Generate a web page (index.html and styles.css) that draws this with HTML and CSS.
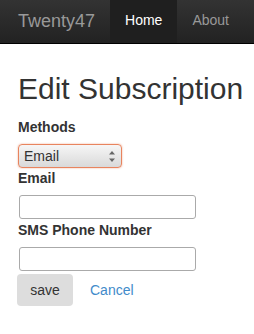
FILE: index.html
```html
<!DOCTYPE html>
<html lang="en">
<head>
    <meta charset="UTF-8">
    <title>Edit Subscription</title>
    <link rel="stylesheet" href="styles.css">
</head>
<body>
    <div class="navbar">
        <a class="brand" href="#">Twenty47</a>
        <ul class="nav">
            <li class="active"><a href="#">Home</a></li>
            <li><a href="#">About</a></li>
        </ul>
    </div>
    <div class="container">
        <h1>Edit Subscription</h1>
        <form>
            <label for="methods">Methods</label>
            <div class="select-wrap">
                <select id="methods">
                    <option>Email</option>
                    <option>SMS</option>
                </select>
                <svg class="arrows" width="6" height="11" viewBox="0 0 6 11">
                    <path d="M3 0 L6 3.5 L0 3.5 Z M0 7.5 L6 7.5 L3 11 Z" fill="#666"/>
                </svg>
            </div>
            <label for="email">Email</label>
            <input type="text" id="email">
            <label for="sms">SMS Phone Number</label>
            <input type="text" id="sms">
            <div class="actions">
                <button type="submit" class="save-button">save</button>
                <a href="#" class="cancel">Cancel</a>
            </div>
        </form>
    </div>
</body>
</html>
```

FILE: styles.css
```css
body {
    font-family: "Liberation Sans", Arial, sans-serif;
    font-size: 14px;
    line-height: 16px;
    margin: 0;
    padding: 0;
    color: #333;
    background: #fff;
}
.navbar {
    display: flex;
    align-items: stretch;
    height: 43px;
    background: linear-gradient(#333, #222);
    border-bottom: 1px solid #000;
}
.brand {
    display: block;
    padding: 11px 15px 0 18px;
    font-size: 18px;
    line-height: 20px;
    color: #999;
    text-decoration: none;
}
.nav {
    display: flex;
    list-style: none;
    margin: 0;
    padding: 0;
}
.nav li a {
    display: block;
    height: 43px;
    box-sizing: border-box;
    padding: 12px 15px 0;
    color: #999;
    text-decoration: none;
}
.nav li.active a {
    background: #1f1f1f;
    color: #fff;
}
.container {
    padding: 0 18px;
}
h1 {
    font-size: 30px;
    font-weight: normal;
    line-height: 34px;
    margin: 28px 0 13px;
    white-space: nowrap;
}
label {
    display: block;
    font-weight: bold;
    margin-bottom: 9px;
}
.select-wrap {
    position: relative;
    width: 104px;
    margin-bottom: 2px;
}
select {
    display: block;
    width: 104px;
    height: 24px;
    padding: 0 0 0 5px;
    appearance: none;
    font-family: inherit;
    font-size: 14px;
    color: #333;
    border: 1px solid #e8845e;
    border-radius: 4px;
    background: linear-gradient(#f6f6f6, #d9d9d9);
    box-shadow: 0 0 2px rgba(232, 132, 94, 0.7);
}
.arrows {
    position: absolute;
    right: 7px;
    top: 7px;
}
input[type="text"] {
    display: block;
    width: 177px;
    height: 24px;
    box-sizing: border-box;
    border: 1px solid #aaa;
    border-radius: 3px;
    margin: 0 0 3px 1px;
}
.actions {
    display: flex;
    align-items: center;
    gap: 17px;
}
.save-button {
    width: 56px;
    height: 32px;
    margin-left: -1px;
    border: none;
    border-radius: 4px;
    background: #ddd;
    color: #333;
    font-family: inherit;
    font-size: 14px;
}
.cancel {
    color: #428bca;
    text-decoration: none;
}
```
